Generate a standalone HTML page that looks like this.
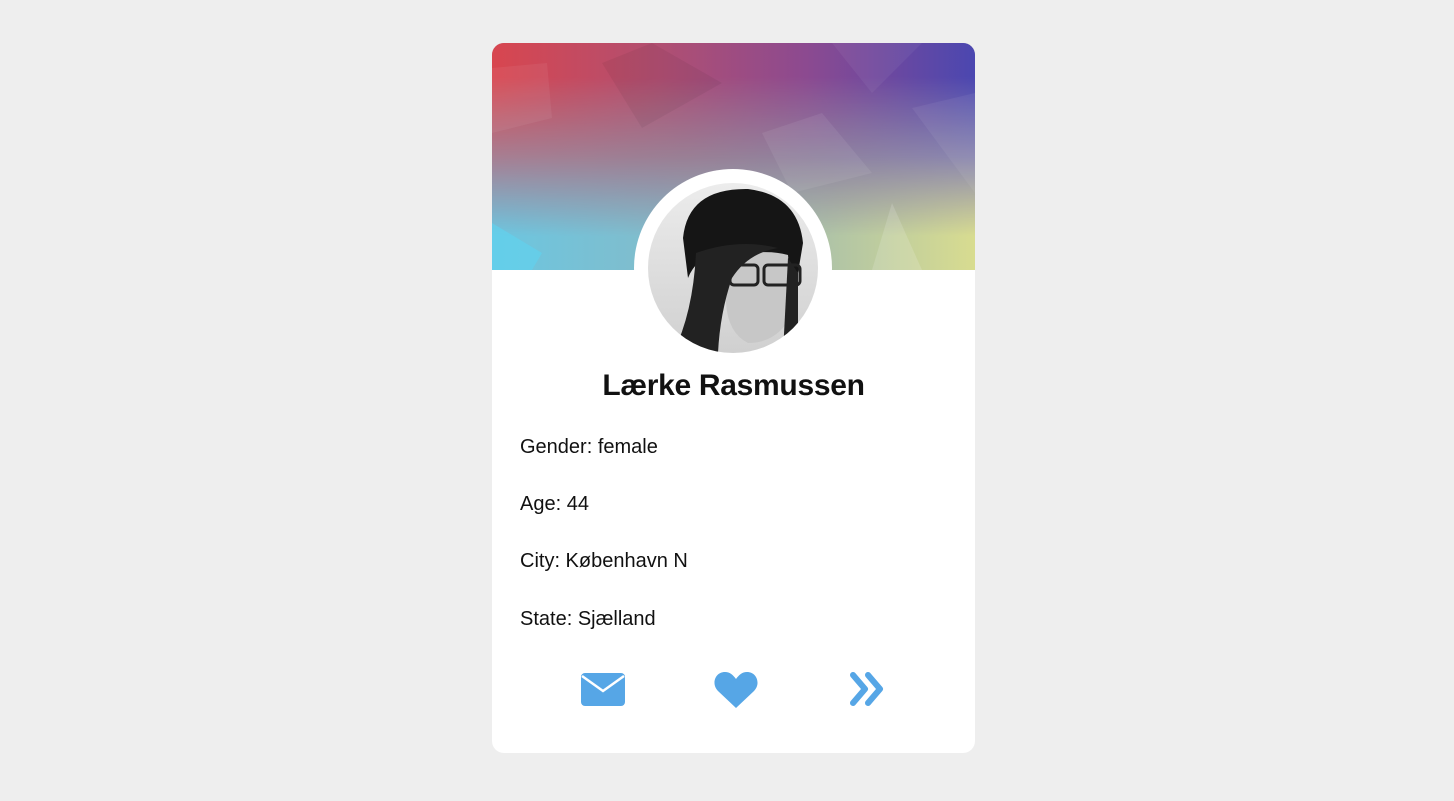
<!DOCTYPE html>
<html><head><meta charset="utf-8"><style>
html,body{margin:0;padding:0;background:#eeeeee;width:1454px;height:801px;overflow:hidden;font-family:"Liberation Sans",sans-serif;}
.card{position:absolute;left:492px;top:43px;width:483px;height:710px;background:#fff;border-radius:12px;overflow:hidden;}
.hdr{position:absolute;left:0;top:0;width:483px;height:227px;}
.ring{position:absolute;left:142px;top:126px;width:198px;height:198px;border-radius:50%;background:#fff;}
.photo{position:absolute;left:156px;top:140px;width:170px;height:170px;border-radius:50%;background:linear-gradient(180deg,#ececec,#d0d0d0);overflow:hidden;}
h1{position:absolute;left:0;width:483px;top:326px;margin:0;text-align:center;font-size:30px;font-weight:bold;color:#111;letter-spacing:-0.3px;}
.p{position:absolute;left:28px;font-size:20px;color:#111;}
.ic{position:absolute;top:628px;}
</style></head><body>
<div class="card">
<svg class="hdr" viewBox="0 0 483 227">
<defs>
<linearGradient id="g1" x1="0" y1="0" x2="1" y2="0"><stop offset="0" stop-color="#d8464f"/><stop offset=".35" stop-color="#b04f72"/><stop offset=".65" stop-color="#8c4a90"/><stop offset="1" stop-color="#4b47b0"/></linearGradient>
<linearGradient id="gm" x1="0" y1="0" x2="1" y2="0"><stop offset="0" stop-color="#a87e92"/><stop offset=".4" stop-color="#9a7f95"/><stop offset=".7" stop-color="#8f82a0"/><stop offset="1" stop-color="#8a86b0"/></linearGradient>
<linearGradient id="g2" x1="0" y1="0" x2="1" y2="0"><stop offset="0" stop-color="#6cc6e0"/><stop offset=".35" stop-color="#82bccb"/><stop offset=".7" stop-color="#b0c4a6"/><stop offset="1" stop-color="#d8dc90"/></linearGradient>
<linearGradient id="v1" x1="0" y1="0" x2="0" y2="1"><stop offset="0" stop-color="#fff"/><stop offset=".15" stop-color="#fff"/><stop offset=".5" stop-color="#fff" stop-opacity="0"/></linearGradient>
<linearGradient id="v2" x1="0" y1="0" x2="0" y2="1"><stop offset=".5" stop-color="#fff" stop-opacity="0"/><stop offset=".85" stop-color="#fff"/></linearGradient>
<mask id="m1"><rect width="483" height="227" fill="url(#v1)"/></mask>
<mask id="m2"><rect width="483" height="227" fill="url(#v2)"/></mask>
</defs>
<rect width="483" height="227" fill="url(#gm)"/>
<rect width="483" height="227" fill="url(#g1)" mask="url(#m1)"/>
<rect width="483" height="227" fill="url(#g2)" mask="url(#m2)"/>
<polygon points="0,25 55,20 60,75 0,90" fill="#fff" opacity=".06"/>
<polygon points="110,20 160,0 230,40 150,85" fill="#000" opacity=".05"/>
<polygon points="270,90 330,70 380,130 300,150" fill="#fff" opacity=".07"/>
<polygon points="420,65 483,50 483,150" fill="#fff" opacity=".06"/>
<polygon points="0,180 50,210 40,227 0,227" fill="#5fd4f0" opacity=".6"/>
<polygon points="400,160 430,227 380,227" fill="#fff" opacity=".15"/>
<polygon points="340,0 430,0 380,50" fill="#fff" opacity=".05"/>
</svg>
<div class="ring"></div>
<div class="photo">
<svg width="170" height="170" viewBox="0 0 170 170">
<path d="M35 55 Q40 5 100 6 Q150 12 155 60 L150 90 Q120 60 80 70 Q50 70 40 95Z" fill="#151515"/>
<path d="M80 75 Q115 65 140 72 L145 130 Q130 160 100 160 Q80 150 78 120Z" fill="#c7c7c7"/>
<path d="M48 70 Q90 55 130 65 Q100 70 84 95 Q72 130 70 170 L25 170 Q45 130 48 70Z" fill="#222"/>
<path d="M140 75 L150 90 L150 170 L135 170Z" fill="#222"/>
<rect x="82" y="82" width="28" height="20" rx="4" fill="none" stroke="#222" stroke-width="3"/>
<rect x="116" y="82" width="36" height="20" rx="4" fill="none" stroke="#222" stroke-width="3"/>
</svg>
</div>
<h1>Lærke Rasmussen</h1>
<div class="p" style="top:393px">Gender: female</div>
<div class="p" style="top:450px">Age: 44</div>
<div class="p" style="top:507px">City: København N</div>
<div class="p" style="top:565px">State: Sjælland</div>
<svg class="ic" style="left:89px" width="44" height="36" viewBox="0 0 44 36"><rect x="0" y="2" width="44" height="33" rx="4" fill="#56a6e6"/><path d="M1 5 L22 20 L43 5" fill="none" stroke="#fff" stroke-width="2.5"/></svg>
<svg class="ic" style="left:222px" width="44" height="38" viewBox="0 0 44 38"><path d="M22 37 L4 20 C-3 13 1 1 11 1 C16 1 19 4 22 8 C25 4 28 1 33 1 C43 1 47 13 40 20 Z" fill="#56a6e6"/></svg>
<svg class="ic" style="left:357px" width="38" height="36" viewBox="0 0 38 36"><path d="M4 4 L16 18 L4 32 M19 4 L31 18 L19 32" fill="none" stroke="#56a6e6" stroke-width="6" stroke-linecap="round" stroke-linejoin="round"/></svg>
</div>
</body></html>
